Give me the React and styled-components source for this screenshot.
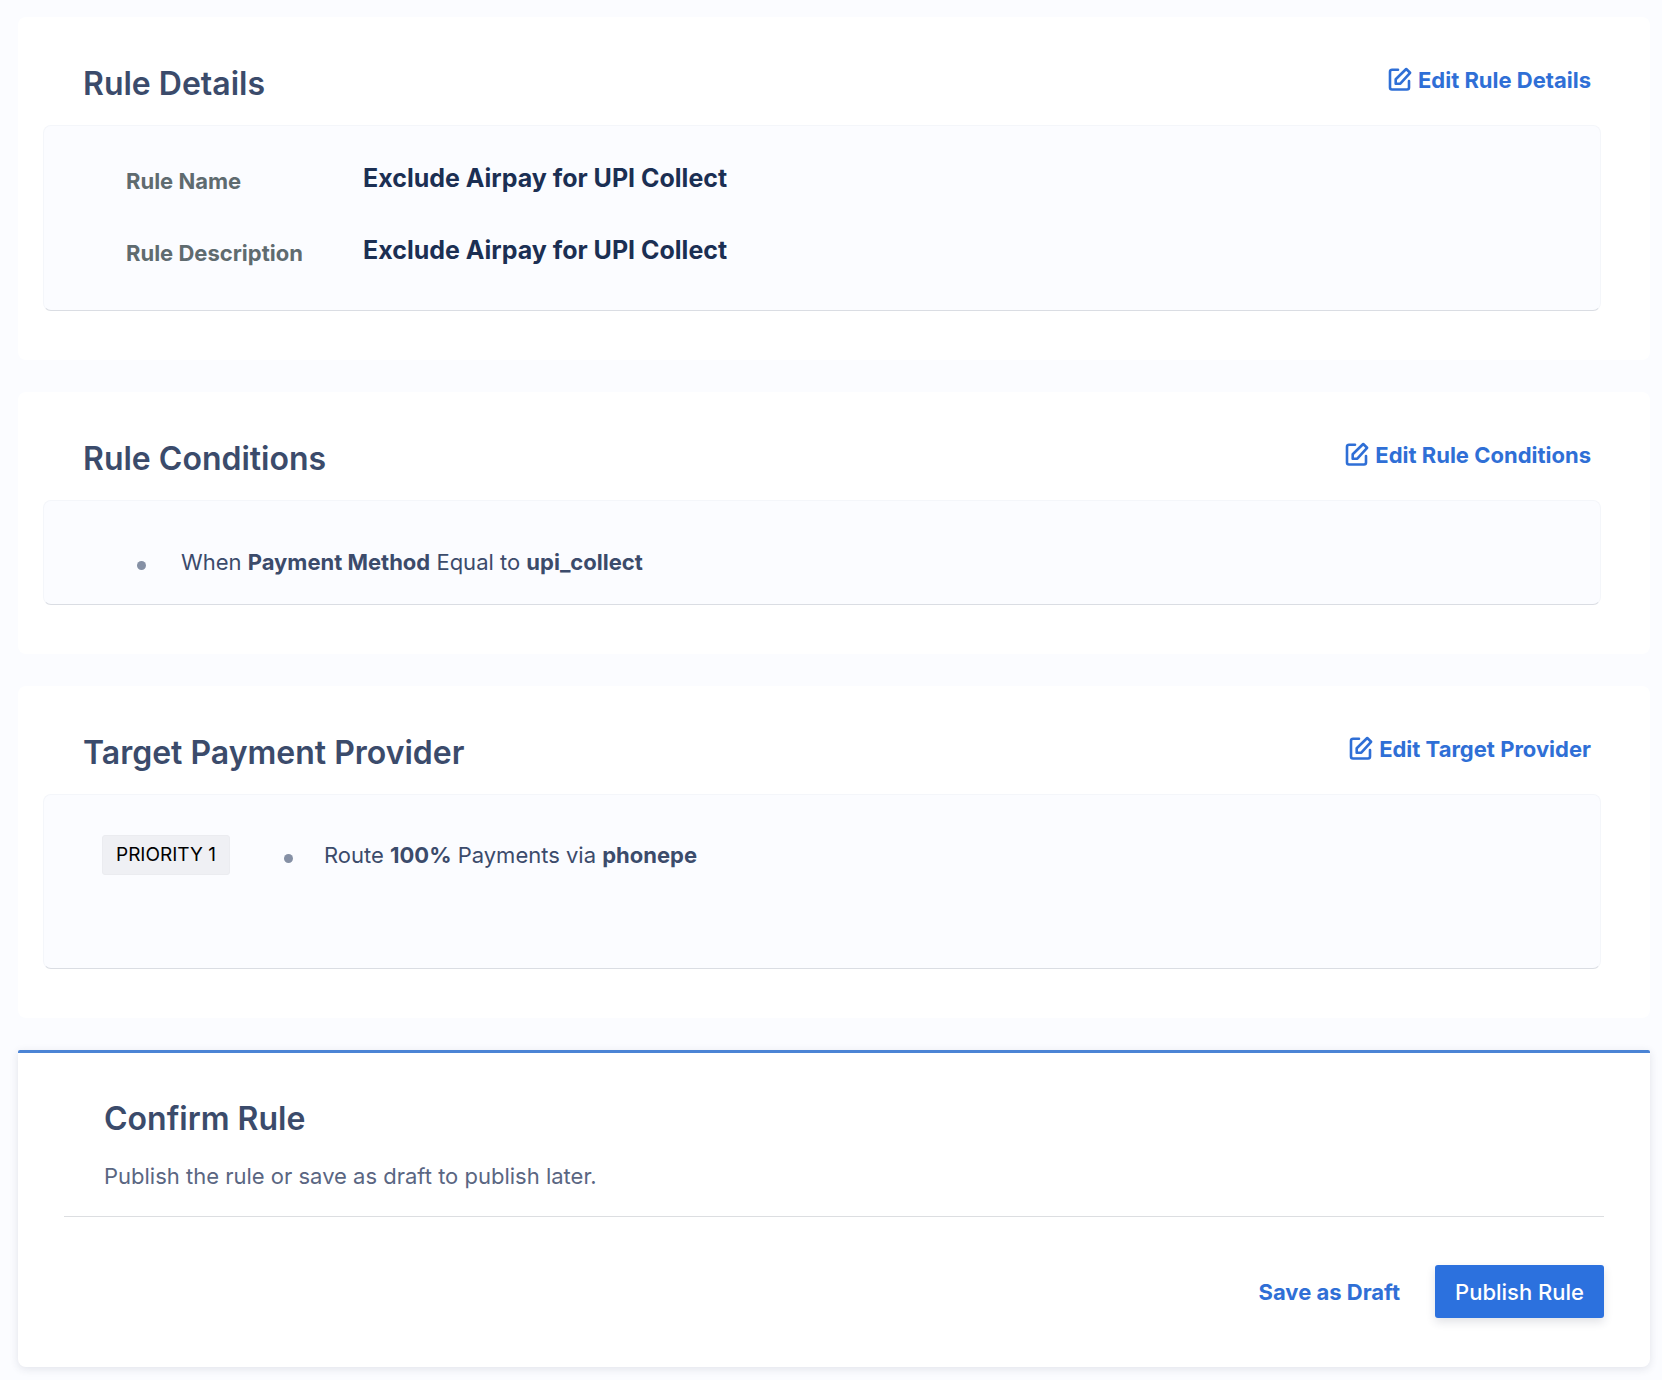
import React from 'react';
import styled, { createGlobalStyle } from 'styled-components';

const GlobalStyle = createGlobalStyle`
  * {
    box-sizing: border-box;
  }
  body {
    margin: 0;
    background: #fbfcff;
    font-family: Inter, 'Liberation Sans', sans-serif;
    font-size: 22px;
    line-height: 26px;
    color: #3b4b6b;
  }
`;

const Page = styled.main`
  display: flex;
  flex-direction: column;
  gap: 32px;
  padding: 17px 12px 13px 18px;
`;

const Card = styled.section`
  padding: 50px 49px 49px 25px;
  background: #ffffff;
  border-radius: 8px;
`;

const CardHeader = styled.header`
  display: flex;
  justify-content: space-between;
  align-items: flex-start;
  padding: 0 10px 24px 40px;
`;

const Title = styled.h2`
  margin: 0;
  font-size: 32px;
  line-height: 34px;
  font-weight: 600;
`;

const TextButton = styled.button`
  display: flex;
  align-items: center;
  gap: 6px;
  padding: 0;
  border: 0;
  background: none;
  font: inherit;
  font-weight: 700;
  color: #2f6fd6;
  cursor: pointer;
`;

const Panel = styled.div`
  padding: ${props => props.$padding};
  background: #fbfcff;
  border: 1px solid #f4f6fa;
  border-bottom-color: #dadde3;
  border-radius: 8px;
`;

const Details = styled.dl`
  display: grid;
  grid-template-columns: 237px 1fr;
  row-gap: 40px;
  align-items: end;
  margin: 0;
`;

const Label = styled.dt`
  font-weight: 700;
  color: #5f6b6f;
`;

const Value = styled.dd`
  margin: 0;
  font-size: 25px;
  line-height: 32px;
  font-weight: 700;
  color: #1b2f53;
`;

const List = styled.ul`
  margin: 0;
  padding: 0;
  list-style: none;
`;

const Item = styled.li`
  display: flex;
  align-items: center;
  gap: ${props => (props.$compact ? '31px' : '35px')};

  &::before {
    content: '';
    width: 9px;
    height: 9px;
    margin-top: 6px;
    border-radius: 50%;
    background: #8590a5;
  }
`;

const PriorityRow = styled.div`
  display: flex;
  align-items: center;
  gap: 54px;
`;

const Badge = styled.span`
  padding: 6px 13px;
  border: 1px solid #ebecf0;
  border-radius: 3px;
  background: #eff0f4;
  font-size: 19px;
  color: #000000;
`;

const ConfirmCard = styled.section`
  padding: 49px 46px;
  background: #ffffff;
  border-top: 3px solid #4b84d5;
  border-radius: 2px 2px 8px 8px;
  box-shadow: 0 2px 8px rgba(40, 50, 80, 0.12);
`;

const ConfirmHeader = styled.header`
  padding: 0 40px 27px;
  border-bottom: 1px solid #dcdee1;
`;

const Hint = styled.p`
  margin: 27px 0 0;
  color: #5a6682;
`;

const Actions = styled.div`
  display: flex;
  justify-content: flex-end;
  gap: 35px;
  padding-top: 48px;
`;

const PublishButton = styled.button`
  height: 53px;
  padding: 0 20px;
  border: 0;
  border-radius: 3px;
  background: #2c71de;
  box-shadow: 0 4px 10px rgba(40, 50, 80, 0.14);
  font: inherit;
  font-weight: 500;
  color: #ffffff;
  cursor: pointer;
`;

const Icon = styled.svg`
  width: 24px;
  height: 24px;
  margin-bottom: 2px;
  fill: none;
  stroke: currentColor;
  stroke-linecap: round;
  stroke-linejoin: round;
`;

const EditIcon = () => (
  <Icon viewBox="0 0 24 24" strokeWidth="2.6" aria-hidden="true">
    <path d="M10 2.7H4a2 2 0 0 0-2 2v15.800a2 2 0 0 0 2 2h15a2 2 0 0 0 2-2V14" />
    <path d="M7.700 16.700v-4.500L18.200 2l3.900 3.800-9.800 10.800z" />
  </Icon>
);

const RuleCard = ({ title, editLabel, padding, children }) => (
  <Card>
    <CardHeader>
      <Title>{title}</Title>
      <TextButton type="button">
        <EditIcon />
        {editLabel}
      </TextButton>
    </CardHeader>
    <Panel $padding={padding}>{children}</Panel>
  </Card>
);

const rule = {
  name: 'Exclude Airpay for UPI Collect',
  description: 'Exclude Airpay for UPI Collect',
  conditions: [
    { field: 'Payment Method', operator: 'Equal to', value: 'upi_collect' }
  ],
  targets: [{ priority: 1, share: 100, provider: 'phonepe' }]
};

export default function App() {
  return (
    <>
      <GlobalStyle />
      <Page>
        <RuleCard
          title="Rule Details"
          editLabel="Edit Rule Details"
          padding="36px 82px 44px"
        >
          <Details>
            <Label>Rule Name</Label>
            <Value>{rule.name}</Value>
            <Label>Rule Description</Label>
            <Value>{rule.description}</Value>
          </Details>
        </RuleCard>

        <RuleCard
          title="Rule Conditions"
          editLabel="Edit Rule Conditions"
          padding="48px 93px 29px"
        >
          <List>
            {rule.conditions.map(({ field, operator, value }) => (
              <Item key={field}>
                <span>
                  When <b>{field}</b> {operator} <b>{value}</b>
                </span>
              </Item>
            ))}
          </List>
        </RuleCard>

        <RuleCard
          title="Target Payment Provider"
          editLabel="Edit Target Provider"
          padding="40px 58px 93px"
        >
          {rule.targets.map(({ priority, share, provider }) => (
            <PriorityRow key={priority}>
              <Badge>PRIORITY {priority}</Badge>
              <List>
                <Item $compact>
                  <span>
                    Route <b>{share}%</b> Payments via <b>{provider}</b>
                  </span>
                </Item>
              </List>
            </PriorityRow>
          ))}
        </RuleCard>

        <ConfirmCard>
          <ConfirmHeader>
            <Title>Confirm Rule</Title>
            <Hint>Publish the rule or save as draft to publish later.</Hint>
          </ConfirmHeader>
          <Actions>
            <TextButton type="button">Save as Draft</TextButton>
            <PublishButton type="button">Publish Rule</PublishButton>
          </Actions>
        </ConfirmCard>
      </Page>
    </>
  );
}
